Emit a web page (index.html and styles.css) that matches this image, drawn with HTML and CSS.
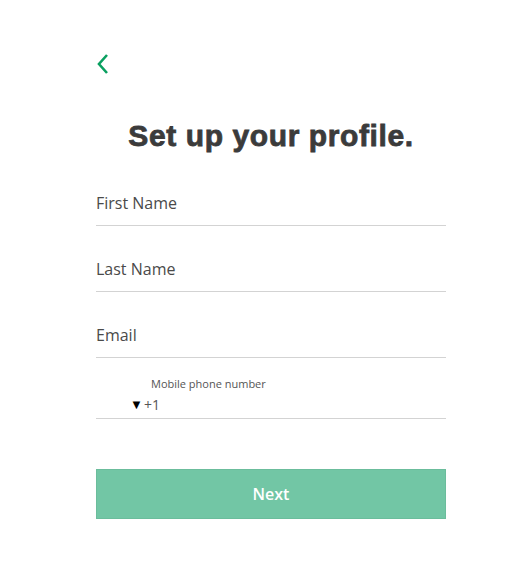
FILE: index.html
```html
<!DOCTYPE html>
<html lang="en">
<head>
  <meta charset="UTF-8" />
  <meta name="viewport" content="width=device-width, initial-scale=1.0" />
  <title>Set up your profile</title>
  <link rel="stylesheet" href="styles.css">
</head>
<body>
  <div class="profile-page">
    <a class="back-link" href="#" aria-label="Back">
      <svg width="14" height="22" viewBox="0 0 14 22">
        <polyline points="11,2 3,11 11,20" fill="none" stroke="#0aa060" stroke-width="2.6" />
      </svg>
    </a>
    <h1 class="title">Set up your profile.</h1>
    <form class="profile-form">
      <div class="field"><input type="text" placeholder="First Name" /></div>
      <div class="field"><input type="text" placeholder="Last Name" /></div>
      <div class="field"><input type="email" placeholder="Email" /></div>
      <div class="field phone-field">
        <label class="phone-label">Mobile phone number</label>
        <div class="phone-row">
          <span class="caret">&#9660;</span><span class="code">+1</span>
        </div>
      </div>
      <button type="button" class="next-btn">Next</button>
    </form>
  </div>
</body>
</html>
```

FILE: styles.css
```css
body {
  margin: 0;
  padding: 0;
  background-color: #fff;
  font-family: 'Open Sans', sans-serif;
  color: #444;
}

.profile-page {
  width: 350px;
  margin-left: 96px;
  padding-top: 53px;
}

.back-link {
  display: block;
  width: 14px;
  height: 22px;
}

.title {
  margin: 43px 0 0;
  text-align: center;
  font-family: 'Liberation Sans', Arial, sans-serif;
  font-weight: 900;
  font-size: 30px;
  line-height: 36px;
  color: #3b3b3b;
  letter-spacing: 0.6px;
  -webkit-text-stroke: 0.8px #3b3b3b;
}

.profile-form {
  margin-top: 37px;
}

.field {
  border-bottom: 1px solid #d3d3d3;
  padding-bottom: 10px;
  margin-top: 31px;
}

.field:first-child {
  margin-top: 0;
}

.field input {
  display: block;
  width: 100%;
  border: none;
  outline: none;
  padding: 0;
  font-family: 'Open Sans', sans-serif;
  font-size: 16px;
  line-height: 24px;
  height: 24px;
  color: #444;
}

.field input::placeholder {
  color: #4a4a4a;
}

.phone-field {
  margin-top: 0;
  padding: 18px 0 5px 34px;
}

.phone-label {
  display: block;
  padding-left: 21px;
  font-size: 11px;
  line-height: 15px;
  color: #555;
}

.phone-row {
  display: flex;
  align-items: center;
  height: 18px;
  margin-top: 4px;
  font-size: 14px;
}

.caret {
  font-size: 13px;
  color: #000;
  margin-right: 1px;
}

.code {
  color: #555;
}

.next-btn {
  display: block;
  width: 350px;
  height: 50px;
  margin-top: 50px;
  background-color: #72c6a5;
  border: 1px solid #6bbd9c;
  color: #fff;
  font-family: 'Open Sans', sans-serif;
  font-size: 16px;
  font-weight: 600;
  cursor: pointer;
}
```
